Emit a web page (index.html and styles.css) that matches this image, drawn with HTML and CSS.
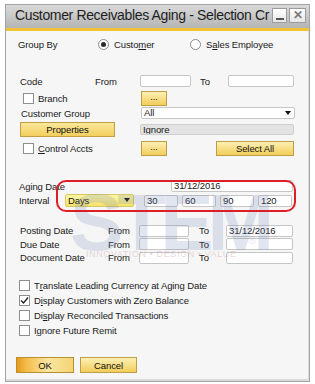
FILE: index.html
```html
<!DOCTYPE html>
<html lang="en">
<head>
    <meta charset="UTF-8">
    <title>Customer Receivables Aging - Selection Criteria</title>
    <link rel="stylesheet" href="styles.css">
</head>
<body>
    <div class="window">
        <div class="titlebar">
            <span class="title">Customer Receivables Aging - Selection Cr</span>
            <span class="tb-btn tb-min"><span class="dash"></span></span>
            <span class="tb-btn tb-close">✕</span>
        </div>

        <div class="content">
            <div class="row row-group">
                <span class="lbl lbl-group">Group By</span>
                <span class="opt opt-customer"><span class="radio on"></span>Custo<u>m</u>er</span>
                <span class="opt"><span class="radio"></span>S<u>a</u>les Employee</span>
            </div>

            <div class="row row-code">
                <span class="lbl w-code">Code</span>
                <span class="lbl w-from">From</span>
                <span class="field w-in1"></span>
                <span class="lbl w-to">To</span>
                <span class="field w-in2"></span>
            </div>

            <div class="row row-btn">
                <span class="check-cell"><span class="check"></span>Branch</span>
                <span class="btn btn-dots">...</span>
            </div>

            <div class="row row-cg">
                <span class="lbl w-cg">Customer Group</span>
                <span class="field select w-wide">All<span class="arrow"></span></span>
            </div>

            <div class="row row-props">
                <span class="btn btn-props">Properties</span>
                <span class="field readonly w-wide">Ignore</span>
            </div>

            <div class="row row-btn">
                <span class="check-cell"><span class="check"></span><u>C</u>ontrol Accts</span>
                <span class="btn btn-dots">...</span>
                <span class="btn btn-all">Select All</span>
            </div>

            <div class="row row-aging">
                <span class="lbl w-aging">Aging Date</span>
                <span class="field w-date">31/12/2016</span>
            </div>

            <div class="row row-interval">
                <span class="lbl w-interval">Interval</span>
                <span class="field select days">Days<span class="arrow"></span></span>
                <span class="field w-num">30</span>
                <span class="field w-num">60</span>
                <span class="field w-num">90</span>
                <span class="field w-num">120</span>
            </div>

            <div class="row row-date row-posting">
                <span class="lbl w-dlabel">Posting Date</span>
                <span class="lbl w-dfrom">From</span>
                <span class="field w-din1"></span>
                <span class="lbl w-dto">To</span>
                <span class="field w-din2">31/12/2016</span>
            </div>
            <div class="row row-date row-due">
                <span class="lbl w-dlabel">Due Date</span>
                <span class="lbl w-dfrom">From</span>
                <span class="field w-din1"></span>
                <span class="lbl w-dto">To</span>
                <span class="field w-din2"></span>
            </div>
            <div class="row row-date">
                <span class="lbl w-dlabel">Document Date</span>
                <span class="lbl w-dfrom">From</span>
                <span class="field w-din1"></span>
                <span class="lbl w-dto">To</span>
                <span class="field w-din2"></span>
            </div>

            <div class="checks">
                <div class="row row-check"><span class="check"></span>T<u>r</u>anslate Leading Currency at Aging Date</div>
                <div class="row row-check"><span class="check checked">
                    <svg width="9" height="9" viewBox="0 0 9 9"><path d="M1 4.5 L3.5 7 L8 1.5" fill="none" stroke="#222" stroke-width="1.4"/></svg>
                </span>D<u>i</u>splay Customers with Zero Balance</div>
                <div class="row row-check"><span class="check"></span>Di<u>s</u>play Reconciled Transactions</div>
                <div class="row row-check"><span class="check"></span>I<u>g</u>nore Future Remit</div>
            </div>

            <div class="row row-actions">
                <span class="btn btn-ok">OK</span>
                <span class="btn btn-cancel">Cancel</span>
            </div>

            <!-- watermark and the red annotation lie over the form -->
            <div class="mark">
                <div class="mark-big">STEM</div>
                <span class="mark-reg">®</span>
                <div class="mark-small">INNOVATION • DESIGN • VALUE</div>
            </div>
            <div class="highlight"></div>
        </div>
    </div>
</body>
</html>
```

FILE: styles.css
```css
* {
    margin: 0;
    padding: 0;
    box-sizing: border-box;
}

body {
    font-family: "Liberation Sans", Arial, sans-serif;
    font-size: 9.5px;
    letter-spacing: -0.1px;
    color: #1a1a1a;
    background: #ffffff;
}

.window {
    margin: 4px 0 0 5px;
    width: 305px;
    height: 378px;
    border: 1px solid #a4a4a4;
    background: #f6f6f6;
    box-shadow: inset -4px -5px 0 -3px #dcdcdc;
}

/* title bar */
.titlebar {
    height: 26px;
    display: flex;
    align-items: center;
    padding: 0 3px 3px 9px;
    background: linear-gradient(#dadada, #b4b4b4);
    border-bottom: 3px solid #f1c232;
}

.title {
    flex: 1;
    font-size: 14px;
    letter-spacing: -0.35px;
    color: #1e1e1e;
    white-space: nowrap;
    overflow: hidden;
}

.tb-btn {
    width: 15px;
    height: 15px;
    margin-left: 2px;
    border: 1px solid #9c9c9c;
    background: linear-gradient(#ffffff, #e6e6e6);
    display: flex;
    align-items: center;
    justify-content: center;
}

.tb-close {
    width: 17px;
    font-size: 12px;
    font-weight: bold;
    color: #7a7a7a;
}

.tb-min .dash {
    width: 8px;
    height: 2px;
    margin-top: 7px;
    background: #555;
}

/* form */
.content {
    position: relative;
    padding: 6px 0 0 14px;
    height: 350px;
}

.row {
    display: flex;
    align-items: center;
    white-space: nowrap;
}

.lbl {
    flex-shrink: 0;
}

.row-group {
    height: 14px;
}

.lbl-group {
    width: 80px;
    margin-left: -2px;
}

.opt {
    display: flex;
    align-items: center;
}

.opt-customer {
    width: 92px;
}

.radio {
    width: 11px;
    height: 11px;
    margin-right: 5px;
    border: 1px solid #8c8c8c;
    border-radius: 50%;
    background: #fff;
    display: flex;
    align-items: center;
    justify-content: center;
}

.radio.on::after {
    content: "";
    width: 5px;
    height: 5px;
    border-radius: 50%;
    background: #2a2a2a;
}

.field {
    height: 12px;
    padding-left: 2px;
    border: 1px solid #c6c6c6;
    border-radius: 2px;
    background: #fff;
    line-height: 10px;
    flex-shrink: 0;
    overflow: hidden;
}

.row-code {
    height: 12px;
    margin-top: 24px;
}

.w-code { width: 75px; }
.w-from { width: 45px; }
.w-in1 { width: 51px; }
.w-to { width: 28px; margin-left: 9px; }
.w-in2 { width: 66px; }

.row-btn {
    height: 16px;
    margin-top: 3px;
}

.check-cell {
    width: 121px;
    display: flex;
    align-items: center;
}

.check {
    width: 11px;
    height: 11px;
    margin: 0 4px 0 3px;
    border: 1px solid #8e8e8e;
    background: #fff;
    display: flex;
    align-items: center;
    justify-content: center;
    flex-shrink: 0;
}

.btn {
    height: 15px;
    display: flex;
    align-items: center;
    justify-content: center;
    border: 1px solid #bf9f45;
    background: linear-gradient(#fdf0b4, #f2cd5a);
    color: #111;
    flex-shrink: 0;
}

.btn-dots {
    width: 26px;
    padding-bottom: 3px;
}

.btn-all {
    width: 78px;
    margin-left: 49px;
}

.row-cg {
    height: 12px;
    margin-top: 1px;
}

.w-cg { width: 120px; margin-left: 1px; }
.w-wide { width: 154px; }

.select {
    position: relative;
}

.arrow {
    position: absolute;
    right: 3px;
    top: 3px;
    border-left: 3.5px solid transparent;
    border-right: 3.5px solid transparent;
    border-top: 4px solid #111;
}

.row-props {
    height: 16px;
    margin-top: 2px;
}

.btn-props {
    width: 95px;
    background: linear-gradient(#fbe79a, #f3cf5e);
}

.readonly {
    margin-left: 25px;
    height: 11px;
    background: #e3e3e3;
    border-color: #cfcfcf;
}

.row-aging {
    height: 12px;
    margin-top: 24px;
}

.w-aging { width: 152px; margin-left: -1px; }
.w-date { width: 122px; }

.row-interval {
    height: 15px;
    margin-top: 1px;
}

.w-interval { width: 46px; margin-left: -1px; }

.days {
    width: 69px;
    height: 13px;
    line-height: 11px;
    border-color: #d8c860;
    background: linear-gradient(#fdf6a8, #f5e46a);
}

.w-num {
    width: 34px;
    margin-left: 4px;
}

.days + .w-num {
    margin-left: 10px;
}

.row-date {
    height: 13px;
}

.row-posting { margin-top: 16px; }
.row-due { height: 14px; }

.w-dlabel { width: 88px; }
.w-dfrom { width: 31px; }
.w-din1 { width: 50px; }
.w-dto { width: 27px; margin-left: 10px; }
.w-din2 { width: 67px; }

.checks {
    margin-top: 14px;
    margin-left: -4px;
}

.row-check {
    height: 15px;
}

.row-check .check {
    margin: 0 4px 0 3px;
}

.row-actions {
    height: 16px;
    margin: 19px 0 0 -4px;
    gap: 6px;
}

.btn-ok {
    width: 58px;
    height: 16px;
    border-color: #b8912e;
    background: linear-gradient(to right, #e89a18 0, #f2bc4a 9px, #fbe5a0 55%, #f4d475 100%);
}

.btn-cancel {
    width: 57px;
    height: 16px;
}

/* watermark */
.mark {
    position: absolute;
    left: 64px;
    top: 152px;
    width: 200px;
    height: 80px;
    color: rgba(120, 138, 182, 0.22);
    pointer-events: none;
}

.mark-big {
    font-size: 80px;
    font-weight: bold;
    line-height: 80px;
    letter-spacing: -6px;
}

.mark-reg {
    position: absolute;
    left: 178px;
    top: 52px;
    font-size: 11px;
    line-height: 11px;
}

.mark-small {
    position: absolute;
    left: 16px;
    top: 66px;
    font-size: 9px;
    line-height: 10px;
    letter-spacing: 0.6px;
    color: rgba(190, 140, 150, 0.35);
}

/* red annotation */
.highlight {
    position: absolute;
    left: 50px;
    top: 149px;
    width: 240px;
    height: 32px;
    border: 2px solid #dc1f26;
    border-radius: 10px;
    pointer-events: none;
}
```
